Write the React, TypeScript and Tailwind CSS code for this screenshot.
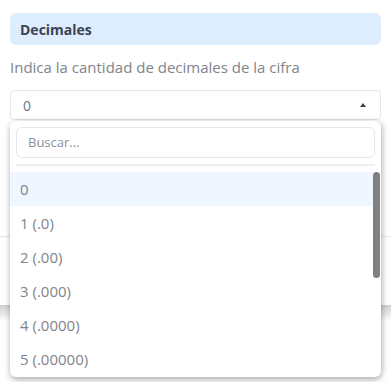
import { useState } from "react";

const options = ["0", "1 (.0)", "2 (.00)", "3 (.000)", "4 (.0000)", "5 (.00000)"];

const App = () => {
  const [selected] = useState("0");

  return (
    <div className="relative h-[382px] w-full overflow-hidden bg-white font-['Open_Sans',sans-serif]">
      <div className="px-[10px] pt-[13px]">
        {/* Section header */}
        <div className="flex h-[32px] items-center rounded-md bg-[#deedfd] px-[10px]">
          <span className="text-[14px] font-bold text-[#3c4354]">Decimales</span>
        </div>

        <p className="mt-[12px] text-[15px] leading-[20px] text-[#7f848b]">
          Indica la cantidad de decimales de la cifra
        </p>

        {/* Select trigger */}
        <div className="mt-[13px] flex h-[30px] items-center justify-between rounded-[4px] border border-[#e4e6ea] pl-[12px] pr-[14px]">
          <span className="text-[14px] text-[#737880]">{selected}</span>
          <svg width="6" height="4" viewBox="0 0 6 4" className="text-[#3b3f45]">
            <path d="M3 0L6 4H0z" fill="currentColor" />
          </svg>
        </div>
      </div>

      {/* Page content behind the menu */}
      <div className="mt-[116px] border-b border-[#e6e6e6]" />
      <div className="mt-[68px] h-[16px] bg-gradient-to-b from-[#cfcfcf] to-white" />

      {/* Dropdown menu */}
      <div className="absolute left-[10px] top-[121px] h-[256px] w-[371px] overflow-hidden rounded-md bg-white shadow-[0_3px_6px_rgba(0,0,0,0.25),2px_0_6px_rgba(0,0,0,0.12)]">
        <div className="px-[6px] pt-[6px]">
          <div className="flex h-[31px] items-center rounded-md border border-[#e4e6ea] px-[11px]">
            <span className="text-[13px] text-[#8b9097]">Buscar...</span>
          </div>
          <div className="mt-[6px] h-[2px] bg-[#eceef1]" />
        </div>
        <div className="relative mt-[6px]">
          {options.map((opt, i) => (
            <div
              key={opt}
              className={`flex h-[34px] items-center pl-[10px] pr-[8px] text-[15px] text-[#7f848b] ${
                i === 0 ? "mr-[8px] bg-[#eff6ff]" : ""
              }`}
            >
              {opt}
            </div>
          ))}
          {/* Scrollbar thumb */}
          <div className="absolute right-[1px] top-0 h-[106px] w-[7px] rounded-full bg-[#808080]" />
        </div>
      </div>
    </div>
  );
};

export default App;
